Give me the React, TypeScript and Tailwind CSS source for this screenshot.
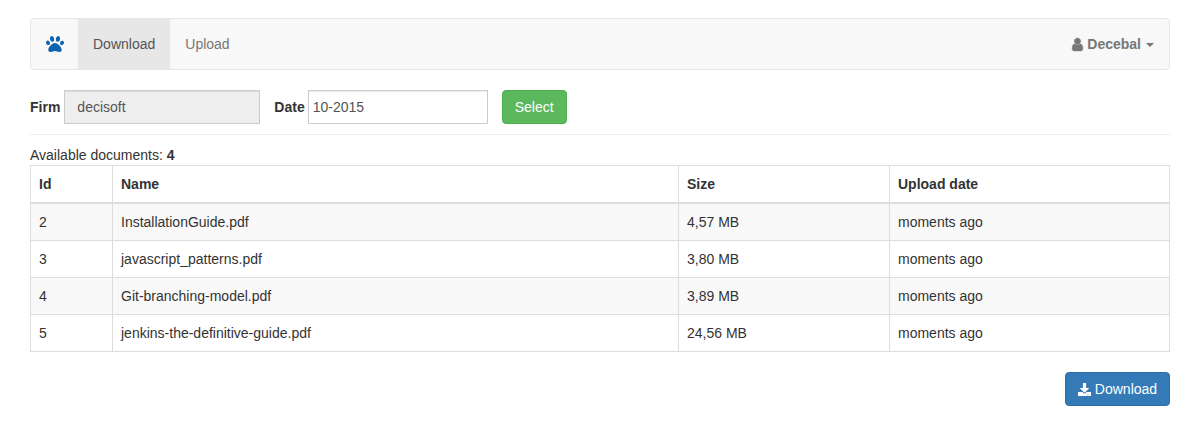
import { FaPaw, FaDownload } from "react-icons/fa";

const docs = [
  { id: 2, name: "InstallationGuide.pdf", size: "4,57 MB", date: "moments ago" },
  { id: 3, name: "javascript_patterns.pdf", size: "3,80 MB", date: "moments ago" },
  { id: 4, name: "Git-branching-model.pdf", size: "3,89 MB", date: "moments ago" },
  { id: 5, name: "jenkins-the-definitive-guide.pdf", size: "24,56 MB", date: "moments ago" },
];

function UserIcon() {
  return (
    <svg viewBox="0 0 1792 1792" className="mr-[2px] h-[15px] w-[15px]" fill="currentColor" stroke="currentColor" strokeWidth={50}>
      <path d="M1536 1399q0 109-62.5 187t-150.5 78h-854q-88 0-150.5-78t-62.5-187q0-85 8.5-160.5t31.5-152 58.5-131 94-89 134.5-34.5q131 128 313 128t313-128q76 0 134.5 34.5t94 89 58.5 131 31.5 152 8.5 160.5zm-256-887q0 159-112.5 271.5t-271.5 112.5-271.5-112.5-112.5-271.5 112.5-271.5 271.5-112.5 271.5 112.5 112.5 271.5z" />
    </svg>
  );
}

export default function App() {
  return (
    <div className="min-h-[439px] bg-white pl-[30px] pr-[32px] pt-[18px] font-['Liberation_Sans',Arial,sans-serif] text-[14px] leading-[20px] text-[#333]">
      {/* Navbar */}
      <nav className="flex h-[52px] items-stretch justify-between rounded border border-[#e7e7e7] bg-[#f8f8f8]">
        <div className="flex items-stretch">
          <div className="flex w-[47px] items-center justify-center text-[#0c63b0]">
            <FaPaw size={18} />
          </div>
          <a className="flex items-center bg-[#e7e7e7] px-[15px] text-[#555]">Download</a>
          <a className="flex items-center px-[15px] text-[#777]">Upload</a>
        </div>
        <div className="flex items-center pr-[15px] font-bold text-[#777]">
          <UserIcon />
          <span>Decebal</span>
          <span className="ml-[5px] mt-[2px] h-0 w-0 border-x-[4px] border-t-[4px] border-x-transparent border-t-[#777]" />
        </div>
      </nav>

      {/* Filter form */}
      <form className="mt-[20px] flex items-center">
        <label className="mr-[4px] font-bold">Firm</label>
        <input
          disabled
          value="decisoft"
          readOnly
          className="h-[34px] w-[196px] border border-[#ccc] bg-[#eee] px-[12px] text-[#555] shadow-[inset_0_1px_1px_rgba(0,0,0,0.075)]"
        />
        <label className="ml-[14px] mr-[3px] font-bold">Date</label>
        <input
          value="10-2015"
          readOnly
          className="h-[34px] w-[180px] border border-[#ccc] bg-white px-[4px] text-[#555] shadow-[inset_0_1px_1px_rgba(0,0,0,0.075)]"
        />
        <button
          type="button"
          className="ml-[14px] h-[34px] w-[65px] rounded border border-[#4cae4c] bg-[#5cb85c] text-white"
        >
          Select
        </button>
      </form>

      <hr className="mt-[10px] border-t border-[#eee]" />

      <p className="mt-[10px] h-[20px] leading-[21px]">
        Available documents: <b>4</b>
      </p>

      {/* Documents table */}
      <table className="w-[1140px] table-fixed border-separate border-spacing-0 border-l border-t border-[#ddd]">
        <colgroup>
          <col className="w-[82px]" />
          <col className="w-[566px]" />
          <col className="w-[211px]" />
          <col className="w-[280px]" />
        </colgroup>
        <thead>
          <tr className="h-[38px] text-left">
            <th className="border-b-2 border-r border-[#ddd] px-[8px] font-bold">Id</th>
            <th className="border-b-2 border-r border-[#ddd] px-[8px] font-bold">Name</th>
            <th className="border-b-2 border-r border-[#ddd] px-[8px] font-bold">Size</th>
            <th className="border-b-2 border-r border-[#ddd] px-[8px] font-bold">Upload date</th>
          </tr>
        </thead>
        <tbody>
          {docs.map((d) => (
            <tr key={d.id} className="h-[37px] odd:bg-[#f9f9f9]">
              <td className="border-b border-r border-[#ddd] px-[8px]">{d.id}</td>
              <td className="border-b border-r border-[#ddd] px-[8px]">{d.name}</td>
              <td className="border-b border-r border-[#ddd] px-[8px]">{d.size}</td>
              <td className="border-b border-r border-[#ddd] px-[8px]">{d.date}</td>
            </tr>
          ))}
        </tbody>
      </table>

      <div className="mt-[20px] flex justify-end">
        <button
          type="button"
          className="flex h-[34px] w-[105px] items-center justify-center rounded border border-[#2e6da4] bg-[#337ab7] text-white"
        >
          <FaDownload size={13} className="mr-[4px]" />
          Download
        </button>
      </div>
    </div>
  );
}
